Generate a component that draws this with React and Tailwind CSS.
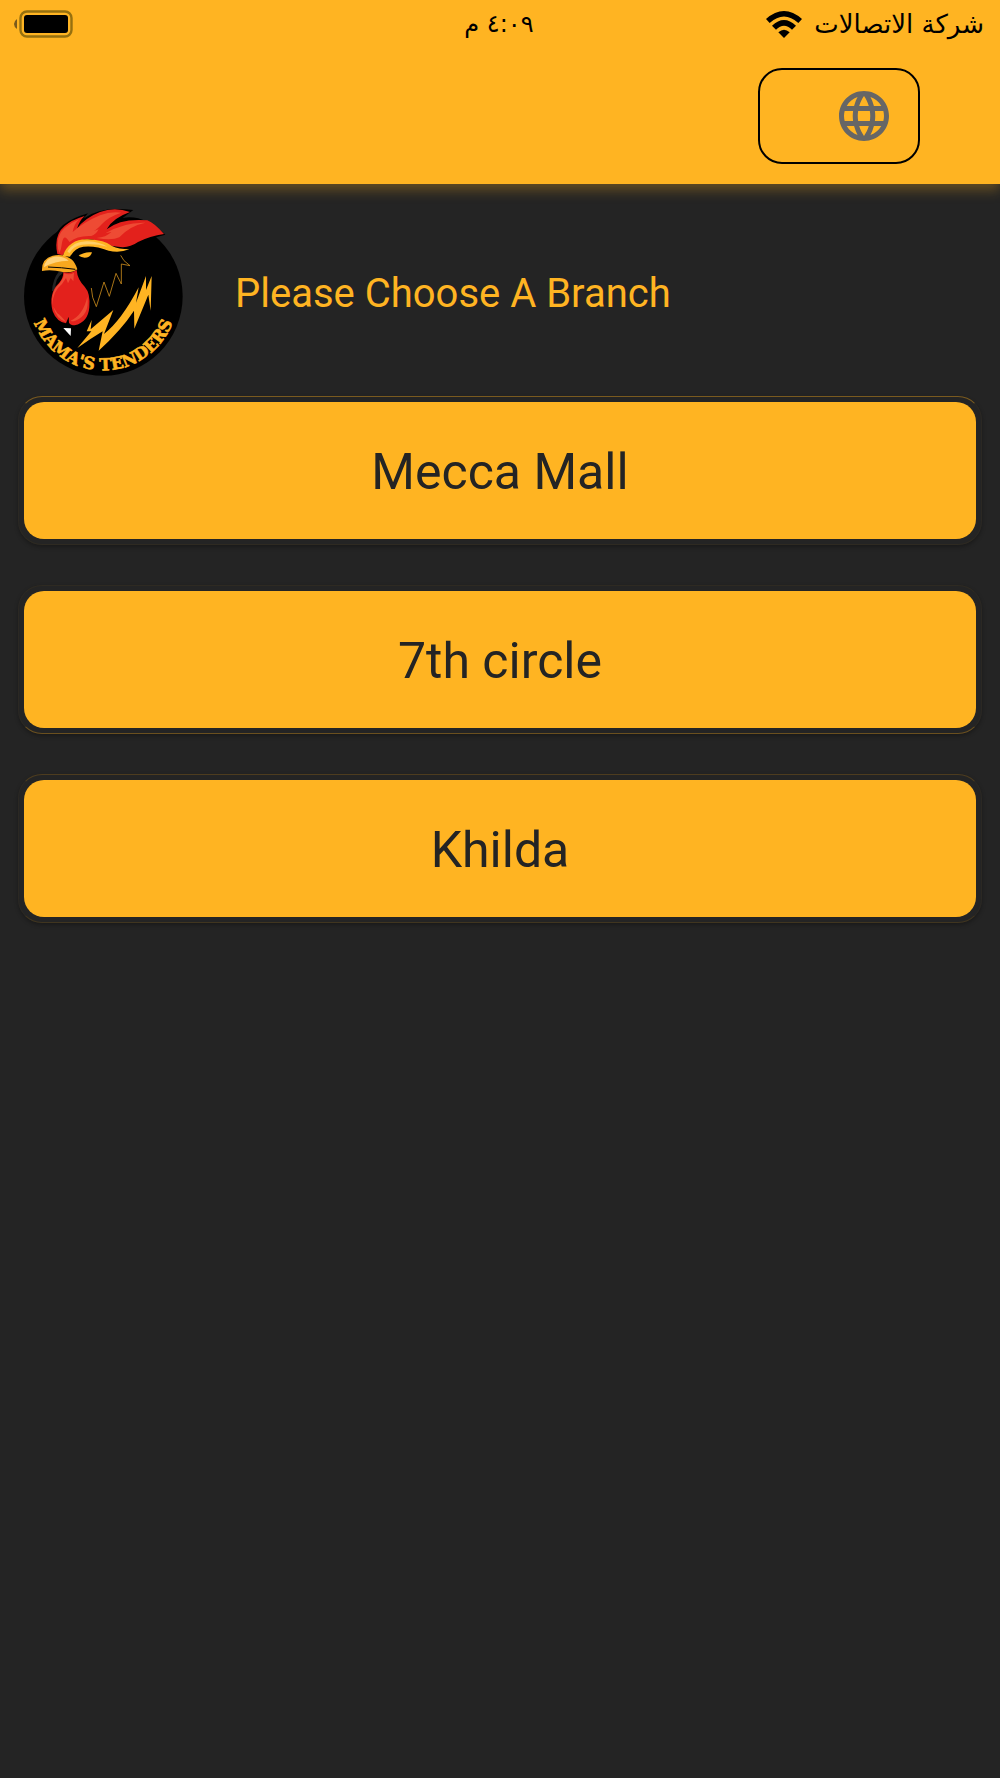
import { MdLanguage } from 'react-icons/md';

const branches = [
  { name: 'Mecca Mall', ring: 'border-t-[#7a5a1f] border-b-[#2e2a22]' },
  { name: '7th circle', ring: 'border-t-[#2e2a22] border-b-[#6b501f]' },
  { name: 'Khilda', ring: 'border-t-[#4d3c1f] border-b-[#40351f]' },
];

const WifiIcon = () => (
  <svg viewBox="0 0 108 81" className="h-[27px] w-9" aria-hidden="true">
    <path d="M0 24 Q54 -24 108 24 L97 36 Q54 -3 11 36 Z" />
    <path d="M18 44 Q54 10 90 44 L78 56 Q54 32 30 56 Z" />
    <path d="M37 64 Q54 49 71 64 L54 81 Z" />
  </svg>
);

const BatteryIcon = () => (
  <svg viewBox="0 0 60 28" className="h-7 w-[60px]" aria-hidden="true">
    <path d="M3 9 Q0 11 0 14 Q0 17 3 19 Z" fill="#7a5a1c" />
    <rect x="6.500" y="1.500" width="51" height="25" rx="6.500" fill="none" stroke="#96700f" strokeWidth="2.400" />
    <rect x="10" y="5" width="44" height="18" rx="3" fill="#000" />
  </svg>
);

const Logo = () => (
  <svg viewBox="72 51 477 507" className="h-[169px] w-[159px] shrink-0" role="img" aria-label="Mama's Tenders">
    <defs>
      <path id="ring-text" d="M88 319 A222 222 0 0 0 532 319" />
    </defs>
    <circle cx="310" cy="319" r="238" />
    <path d="M168 300 Q160 268 192 246 L176 246 Q158 268 156 304 Z" fill="#242424" />

    {/* comb */}
    <path d="M164 150 Q168 98 264 70 L250 86 Q300 48 400 60 L368 84 Q430 72 496 134 Q440 146 400 178 Q360 190 300 178 L170 210 Z" />
    <path d="M172 192 Q160 136 194 108 Q214 90 254 78 Q238 92 231 116 Q254 84 300 66 Q344 50 390 66 Q338 84 320 118 Q362 84 442 91 Q464 100 492 132 Q450 138 414 156 Q386 176 354 170 Q310 166 284 150 Q226 138 188 196 Z" fill="#e3211c" />
    <path d="M174 176 Q168 136 194 114 Q212 98 238 88 Q222 102 218 126 Q252 96 300 76 Q330 64 364 68 Q326 80 306 102 Q286 124 274 126 L296 118 Q288 134 274 138 Q232 136 208 156 Q192 128 186 158 Q184 178 178 190 Z" fill="#ee4b34" />
    <path d="M316 130 Q372 96 436 98 Q388 108 358 142 Q336 152 290 144 Q318 142 334 126 Z" fill="#ee4b34" />

    {/* brow */}
    <path d="M188 198 Q208 146 264 148 Q314 150 336 168 Q356 178 388 178 Q358 190 326 182 Q286 166 250 170 Q224 174 210 200 Z" fill="#ffb422" />
    <path d="M202 184 Q222 152 264 154 Q300 156 322 170 Q286 160 246 164 Q220 168 208 190 Z" fill="#ffcf69" />
    <path d="M236 197 Q254 184 276 187 Q272 203 254 203 Q244 202 236 197 Z" fill="#ffb422" />

    {/* beak */}
    <path d="M126 243 Q124 206 158 197 Q190 190 214 208 Q226 218 232 238 Q218 250 188 246 Q154 238 126 243 Z" fill="#f7a81f" />
    <path d="M132 232 Q134 206 162 200 Q190 198 206 212 Q164 212 132 232 Z" fill="#ffd27a" />
    <path d="M144 231 Q184 232 226 238" fill="none" stroke="#000" strokeWidth="3" />

    {/* wattle */}
    <path d="M190 246 Q212 252 230 240 Q232 268 254 290 Q272 310 268 352 Q264 398 224 406 Q212 406 207 398 L206 380 L198 400 Q170 396 158 364 Q144 310 178 278 Q190 264 190 246 Z" fill="#e3211c" />
    <path d="M192 250 Q210 256 222 248 L220 274 L212 264 L204 280 L198 264 L186 282 Q156 306 158 346 Q150 306 180 278 Q192 264 192 250 Z" fill="#ee4b34" />
    <path d="M262 320 Q270 374 226 392 Q216 396 212 392 Q250 374 262 320 Z" fill="#ee4b34" />
    <path d="M160 350 Q168 386 198 396 Q182 376 172 370 Z" fill="#ee4b34" />
    <path d="M190 414 L213 415 L212 438 Z" fill="#fff" />

    {/* feathers */}
    <path d="M274 294 L278 322 L289 350 L312 276 L328 319 L348 250 L364 282 L364 222 L390 227 L372 212 L362 196" fill="none" stroke="#c98a1c" strokeWidth="2.500" />
    <path d="M232 474 L274 424 L260 424 L275 390 L272 418 L340 360 L312 432 Q364 392 416 292 L408 338 L438 258 L438 300 L455 258 L452 362 L445 314 L403 416 L402 362 Q364 420 296 482 L308 424 Q272 446 232 474 Z" fill="#ffb422" />
    <text className="fill-[#ffb422] stroke-[#ffb422] stroke-2 font-['DejaVu_Serif',serif] text-[50px] font-bold">
      <textPath href="#ring-text" startOffset="50%" textAnchor="middle">MAMA'S TENDERS</textPath>
    </text>
  </svg>
);

const App = () => {
  return (
    <div className="min-h-screen bg-[#242424] font-['Roboto',sans-serif]">
      <header className="bg-[#ffb422] pb-5 shadow-[0_6px_12px_rgba(255,180,34,0.3)]">
        <div className="grid grid-cols-3 items-center pl-3.5 pr-4 h-12">
          <BatteryIcon />
          <p lang="ar" dir="rtl" className="text-center font-['DejaVu_Sans',sans-serif] text-2xl">٤:٠٩ م</p>
          <div lang="ar" dir="rtl" className="flex items-center gap-3 font-['DejaVu_Sans',sans-serif] text-[26px] whitespace-nowrap">
            <span>شركة الاتصالات</span>
            <WifiIcon />
          </div>
        </div>
        <div className="flex justify-end pt-5 pr-20">
          <button aria-label="Change language" className="flex h-24 w-[162px] items-center justify-end rounded-3xl border-2 border-black pr-6">
            <MdLanguage className="size-[60px] text-[#666]" />
          </button>
        </div>
      </header>

      <main>
        <div className="flex items-center gap-[52px] px-6 pt-[23px] pb-5">
          <Logo />
          <h1 className="pt-1 text-[40px] text-[#ffb422]">Please Choose A Branch</h1>
        </div>
        <ul className="flex flex-col gap-10 px-[18px]">
          {branches.map((branch) => (
            <li key={branch.name} className={`rounded-3xl border border-x-[#2b2823] p-[5px] shadow-[0_2px_4px_rgba(0,0,0,0.3)] ${branch.ring}`}>
              <button className="h-[137px] w-full rounded-[20px] bg-[#ffb422] pt-1 text-[50px] text-[#242424]">
                {branch.name}
              </button>
            </li>
          ))}
        </ul>
      </main>
    </div>
  );
};

export default App;
